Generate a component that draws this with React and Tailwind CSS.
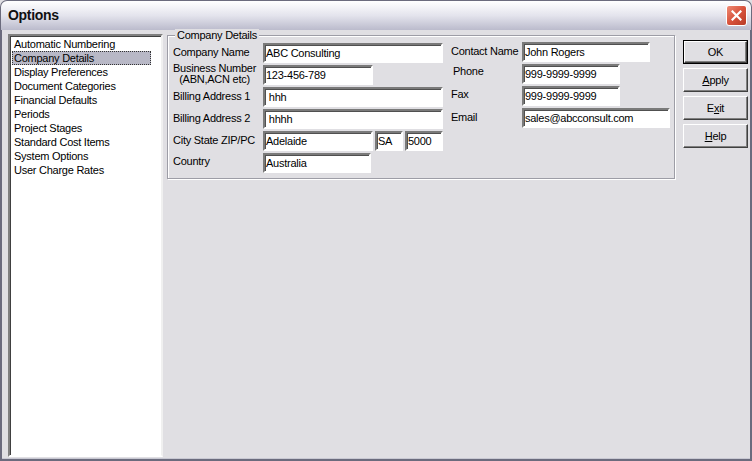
import React from 'react';

/**
 * Options dialog — Company Details page
 */

function Field({ w, value }) {
  return (
    <div
      className={`h-[20px] ${w} shrink-0 bg-white border-2 border-t-[#7a7a7a] border-l-[#7a7a7a] border-b-white border-r-white shadow-[inset_1px_1px_0_#505050] pl-[1px] flex items-center whitespace-pre overflow-hidden`}
    >
      {value}
    </div>
  );
}

function Btn({ children, def }) {
  const inner = (
    <div className="h-full w-full flex items-center justify-center bg-[#e0dfe3] border border-t-white border-l-white border-b-[#404040] border-r-[#404040] shadow-[inset_-1px_-1px_0_#808080]">
      {children}
    </div>
  );
  if (def) {
    return <div className="h-[24px] w-[65px] border border-black">{inner}</div>;
  }
  return <div className="h-[24px] w-[65px]">{inner}</div>;
}

const pages = [
  'Automatic Numbering',
  'Company Details',
  'Display Preferences',
  'Document Categories',
  'Financial Defaults',
  'Periods',
  'Project Stages',
  'Standard Cost Items',
  'System Options',
  'User Charge Rates',
];

export default function App() {
  return (
    <div className="w-[752px] h-[461px] flex flex-col bg-[#e0dfe3] text-black text-[11px] leading-[13px] tracking-[-0.25px] font-['Liberation_Sans',Arial,sans-serif] overflow-hidden">
      {/* title bar */}
      <div className="h-[30px] shrink-0 flex items-center justify-between pl-[7px] pr-[4px] rounded-t-[7px] border border-b-0 border-[#6b6b7d] bg-gradient-to-b from-[#ffffff] via-[#e4e4ed] to-[#bbbbcc]">
        <span className="text-[14px] font-bold text-[#111] tracking-[-0.3px]">Options</span>
        <div className="w-[21px] h-[21px] rounded-[3px] border border-white bg-gradient-to-br from-[#ee8a74] via-[#d8523c] to-[#b83a26] flex items-center justify-center">
          <svg width="11" height="11" viewBox="0 0 11 11">
            <path d="M1.5 1.5 L9.5 9.5 M9.5 1.5 L1.5 9.5" stroke="white" strokeWidth="2.2" strokeLinecap="square" />
          </svg>
        </div>
      </div>

      {/* body */}
      <div className="flex-1 flex items-start gap-[4px] pl-[6px] pt-[4px] pr-[1px] border-x-2 border-b-2 border-[#6b6b7d] shadow-[inset_0_-1px_0_#c8c8d2]">
        {/* page list */}
        <div className="w-[155px] h-[423px] shrink-0 bg-white border-2 border-t-[#808080] border-l-[#808080] border-b-white border-r-[#f0f0f0] shadow-[inset_1px_1px_0_#404040] pt-[1px] px-[2px]">
          {pages.map((p) => (
            <div
              key={p}
              className={
                p === 'Company Details'
                  ? 'h-[14px] w-[139px] px-[1px] flex items-center bg-[#b8b8c6] border border-dotted border-[#333]'
                  : 'h-[14px] w-[139px] px-[2px] flex items-center'
              }
            >
              {p}
            </div>
          ))}
        </div>

        {/* group box */}
        <div className="relative mt-[1px] w-[508px] h-[144px] shrink-0 border border-[#9d9da6] shadow-[inset_1px_1px_0_#fff,1px_1px_0_#fff] pl-[5px] pt-[7px]">
          <span className="absolute -top-[7px] left-[7px] px-[2px] bg-[#e0dfe3]">Company Details</span>
          <div className="flex gap-[8px]">
            {/* left column */}
            <div className="flex flex-col gap-[2px] w-[270px]">
              <div className="flex items-center">
                <span className="w-[90px] -mt-[2px]">Company Name</span>
                <Field w="w-[180px]" value="ABC Consulting" />
              </div>
              <div className="flex items-center">
                <span className="w-[90px] -mt-[2px] leading-[11px]">
                  <span className="inline-block text-center">Business Number<br />(ABN,ACN etc)</span>
                </span>
                <Field w="w-[110px]" value="123-456-789" />
              </div>
              <div className="flex items-center">
                <span className="w-[90px] -mt-[2px]">Billing Address 1</span>
                <Field w="w-[180px]" value=" hhh" />
              </div>
              <div className="flex items-center">
                <span className="w-[90px] -mt-[2px]">Billing Address 2</span>
                <Field w="w-[180px]" value=" hhhh" />
              </div>
              <div className="flex items-center">
                <span className="w-[90px] -mt-[2px]">City State ZIP/PC</span>
                <Field w="w-[110px]" value="Adelaide" />
                <div className="w-[2px]" />
                <Field w="w-[28px]" value="SA" />
                <div className="w-[2px]" />
                <Field w="w-[38px]" value="5000" />
              </div>
              <div className="flex items-center">
                <span className="w-[90px] -mt-[4px]">Country</span>
                <Field w="w-[108px]" value="Australia" />
              </div>
            </div>

            {/* right column */}
            <div className="flex flex-col gap-[2px] -mt-[1px]">
              <div className="flex items-center">
                <span className="w-[71px] -mt-[2px]">Contact Name</span>
                <Field w="w-[128px]" value="John Rogers" />
              </div>
              <div className="flex items-center">
                <span className="w-[71px] pl-[2px] -mt-[6px]">Phone</span>
                <Field w="w-[98px]" value="999-9999-9999" />
              </div>
              <div className="flex items-center">
                <span className="w-[71px] -mt-[4px]">Fax</span>
                <Field w="w-[98px]" value="999-9999-9999" />
              </div>
              <div className="flex items-center">
                <span className="w-[71px] -mt-[2px]">Email</span>
                <Field w="w-[148px]" value="sales@abcconsult.com" />
              </div>
            </div>
          </div>
        </div>

        {/* buttons */}
        <div className="ml-[4px] mt-[6px] flex flex-col gap-[4px]">
          <Btn def>OK</Btn>
          <Btn>
            <span><span className="underline">A</span>pply</span>
          </Btn>
          <Btn>
            <span>E<span className="underline">x</span>it</span>
          </Btn>
          <Btn>
            <span><span className="underline">H</span>elp</span>
          </Btn>
        </div>
      </div>
    </div>
  );
}
